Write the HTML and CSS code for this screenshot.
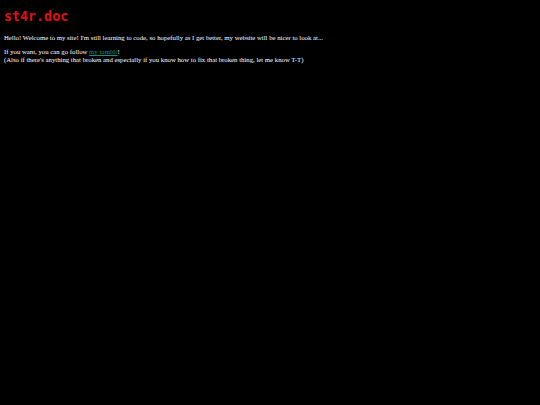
FILE: index.html
```html
<!DOCTYPE html>
<html>
<head>
<meta charset="utf-8">
<link rel="stylesheet" href="styles.css">
</head>
<body>
<h1 class="title">st4r.doc</h1>
<p class="text">Hello! Welcome to my site! I'm still learning to code, so hopefully as I get better, my website will be nicer to look at...</p>
<p class="text">If you want, you can go follow <a class="link" href="#">my tumblr</a>!<br>(Also if there's anything that broken and especially if you know how to fix that broken thing, let me know T-T)</p>
</body>
</html>
```
FILE: styles.css
```css
html, body {
  background: #000;
}
body {
  margin: 4px;
  color: #fff;
  font-family: "Liberation Serif", serif;
  font-size: 6.75px;
  line-height: 8px;
}
.title {
  font-family: "DejaVu Sans Mono", monospace;
  font-weight: bold;
  font-size: 13.33px;
  line-height: 16px;
  color: #e01010;
  margin: 5px 0 9px;
}
.text {
  margin: 6px 0;
}
.link {
  color: #1f8a80;
}
```
